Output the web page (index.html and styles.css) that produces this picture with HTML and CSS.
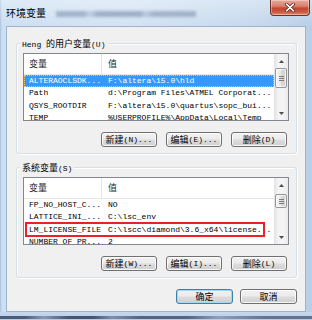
FILE: index.html
```html
<!DOCTYPE html>
<html lang="zh-CN">
<head>
<meta charset="utf-8">
<title>环境变量</title>
<link rel="stylesheet" href="styles.css">
</head>
<body>
<div class="window">
  <header class="titlebar">
    <span class="title">环境变量</span>
    <span class="blurred" aria-hidden="true"></span>
    <button class="close" aria-label="关闭">
      <svg width="12" height="9" viewBox="0 0 12 9"><path d="M2.5 1.2 L9.5 7.8 M9.5 1.2 L2.5 7.8" stroke="#5a1f18" stroke-width="3" stroke-linecap="round"/><path d="M2.5 1.2 L9.5 7.8 M9.5 1.2 L2.5 7.8" stroke="#fff" stroke-width="1.6" stroke-linecap="round"/></svg>
    </button>
  </header>
  <main class="client">
    <section class="group">
      <div class="group-label">Heng <span class="cj">的用户变量</span>(U)</div>
      <div class="list">
        <div class="list-body">
          <div class="list-head"><div class="cell"><span class="cj">变量</span></div><div class="cell"><span class="cj">值</span></div></div>
          <div class="row selected"><div class="cell">ALTERAOCLSDK...</div><div class="cell">F:\altera\15.0\hld</div></div>
          <div class="row"><div class="cell">Path</div><div class="cell">d:\Program Files\ATMEL Corporat...</div></div>
          <div class="row"><div class="cell">QSYS_ROOTDIR</div><div class="cell">F:\altera\15.0\quartus\sopc_bui...</div></div>
          <div class="row"><div class="cell">TEMP</div><div class="cell">%USERPROFILE%\AppData\Local\Temp</div></div>
        </div>
        <div class="scrollbar">
          <div class="sb-arrow"><svg width="5" height="3" viewBox="0 0 5 3"><path d="M0 3 L2.5 0 L5 3Z" fill="#4d4d4d"/></svg></div>
          <div class="sb-track"><div class="sb-thumb"><svg width="5" height="5" viewBox="0 0 5 5"><path d="M0 .5H5M0 2.5H5M0 4.5H5" stroke="#7a7a7a" stroke-width="1"/></svg></div></div>
          <div class="sb-arrow"><svg width="5" height="3" viewBox="0 0 5 3"><path d="M0 0 L2.5 3 L5 0Z" fill="#4d4d4d"/></svg></div>
        </div>
      </div>
      <div class="btn-row">
        <button class="btn"><span class="cj">新建</span>(N)...</button>
        <button class="btn"><span class="cj">编辑</span>(E)...</button>
        <button class="btn"><span class="cj">删除</span>(D)</button>
      </div>
    </section>
    <section class="group">
      <div class="group-label"><span class="cj">系统变量</span>(S)</div>
      <div class="list">
        <div class="list-body">
          <div class="list-head"><div class="cell"><span class="cj">变量</span></div><div class="cell"><span class="cj">值</span></div></div>
          <div class="row"><div class="cell">FP_NO_HOST_C...</div><div class="cell">NO</div></div>
          <div class="row"><div class="cell">LATTICE_INI_...</div><div class="cell">C:\lsc_env</div></div>
          <div class="row"><div class="cell">LM_LICENSE_FILE</div><div class="cell">C:\lscc\diamond\3.6_x64\license...</div></div>
          <div class="row"><div class="cell">NUMBER_OF_PR...</div><div class="cell">2</div></div>
        </div>
        <div class="scrollbar">
          <div class="sb-arrow"><svg width="5" height="3" viewBox="0 0 5 3"><path d="M0 3 L2.5 0 L5 3Z" fill="#4d4d4d"/></svg></div>
          <div class="sb-track"><div class="sb-thumb sb-thumb-sm"><svg width="5" height="5" viewBox="0 0 5 5"><path d="M0 .5H5M0 2.5H5M0 4.5H5" stroke="#7a7a7a" stroke-width="1"/></svg></div></div>
          <div class="sb-arrow"><svg width="5" height="3" viewBox="0 0 5 3"><path d="M0 0 L2.5 3 L5 0Z" fill="#4d4d4d"/></svg></div>
        </div>
        <div class="highlight" aria-hidden="true"></div>
      </div>
      <div class="btn-row">
        <button class="btn"><span class="cj">新建</span>(W)...</button>
        <button class="btn"><span class="cj">编辑</span>(I)...</button>
        <button class="btn"><span class="cj">删除</span>(L)</button>
      </div>
    </section>
    <div class="dialog-buttons">
      <button class="btn btn-wide btn-default"><span class="cj">确定</span></button>
      <button class="btn btn-wide"><span class="cj">取消</span></button>
    </div>
  </main>
  <div class="frame-bottom"></div>
</div>
</body>
</html>
```
FILE: styles.css
```css
* { box-sizing: border-box; }
html, body { margin: 0; padding: 0; }
body {
  width: 312px;
  height: 320px;
  overflow: hidden;
  font-family: "Liberation Mono", "Noto Sans CJK SC", monospace;
  font-size: 8px;
  color: #000;
  background: #fff;
}
.cj { font-family: "Noto Sans CJK SC", sans-serif; font-size: 9px; }

.window {
  width: 312px;
  height: 320px;
  display: flex;
  flex-direction: column;
  background: linear-gradient(90deg, #a9c0dc 0, #cddff2 2px, #d4e3f4 40%, #c6d9ee 80%, #b9cfe8 100%);
}

.titlebar {
  height: 26px;
  flex: none;
  display: flex;
  align-items: flex-start;
  padding-left: 6px;
  background: linear-gradient(180deg, rgba(255,255,255,.35), rgba(255,255,255,0) 26px);
}
.title {
  font-family: "Noto Sans CJK SC", sans-serif;
  font-size: 10px;
  line-height: 10px;
  margin-top: 8px;
}
.blurred {
  width: 140px;
  height: 6px;
  margin: 11px 0 0 10px;
  background: linear-gradient(90deg, rgba(100,120,150,.45) 0 20%, rgba(100,120,150,.2) 24%, rgba(100,120,150,.5) 30% 60%, rgba(100,120,150,.25) 64%, rgba(100,120,150,.45) 70% 100%);
  filter: blur(1.5px);
}
.close {
  margin-left: auto;
  margin-right: 2px;
  width: 40px;
  height: 16px;
  padding: 0;
  border: 1px solid #6e3026;
  border-top: none;
  border-radius: 0 0 4px 4px;
  background: linear-gradient(180deg, #e9a99a 0, #d98270 40%, #c4462f 55%, #c95a40 80%, #dc8c72 100%);
  box-shadow: inset 0 0 0 1px rgba(255,255,255,.35);
  display: flex;
  align-items: center;
  justify-content: center;
}

.client {
  flex: 1;
  margin: 0 6px;
  background: #f0f0f0;
  border: 1px solid #9fb3cb;
  padding: 16px 8px 0 9px;
  display: flex;
  flex-direction: column;
}

.group {
  border: 1px solid #d5dfe5;
  border-radius: 3px;
  padding: 0 7px 6px 6px;
  box-shadow: inset 1px 1px 0 #fff, 1px 1px 0 #fff;
}
.group + .group { margin-top: 13px; }
.group-label {
  width: fit-content;
  height: 11px;
  line-height: 11px;
  margin: -6px 0 0 -3px;
  padding: 0 2px;
  background: #f0f0f0;
  white-space: nowrap;
}

.list {
  position: relative;
  margin-top: 4px;
  height: 68px;
  border: 1px solid #828790;
  background: #fff;
  display: flex;
  overflow: hidden;
}
.list-body { flex: 1; min-width: 0; }
.list-head {
  display: grid;
  grid-template-columns: 78px 1fr;
  height: 20.5px;
  border-bottom: 1px solid #e5e5e5;
  color: #1e1e1e;
}
.list-head .cell {
  display: flex;
  align-items: center;
  height: 100%;
}
.list-head .cell:first-child { border-right: 1px solid #e5e5e5; }
.row {
  display: grid;
  grid-template-columns: 78px 1fr;
  height: 12.5px;
  line-height: 12.5px;
}
.cell {
  padding-left: 5px;
  white-space: nowrap;
  overflow: hidden;
}
.cell + .cell { padding-left: 6px; }
.row.selected {
  background: #3399ff;
  color: #fff;
  outline: 1px dotted #f7c27a;
  outline-offset: -1px;
}

.scrollbar {
  width: 14px;
  flex: none;
  display: flex;
  flex-direction: column;
  background: linear-gradient(90deg, #e2e2e2, #f4f4f4 30%, #f4f4f4 70%, #e9e9e9);
}
.sb-arrow {
  height: 14px;
  display: flex;
  align-items: center;
  justify-content: center;
}
.sb-track { flex: 1; }
.sb-thumb {
  height: 20px;
  margin: 0 1px;
  border: 1px solid #959595;
  border-radius: 2px;
  background: linear-gradient(90deg, #f4f4f4, #e8e8e8 50%, #d9d9d9 51%, #d2d2d2);
  box-shadow: inset 0 0 0 1px rgba(255,255,255,.7);
  display: flex;
  align-items: center;
  justify-content: center;
}
.sb-thumb-sm { height: 14px; margin-top: 2px; }

.highlight {
  position: absolute;
  left: 1px;
  top: 44px;
  width: 240px;
  height: 15px;
  border: 2px solid #ec2127;
}

.btn-row {
  display: flex;
  justify-content: flex-end;
  gap: 9px;
  margin: 11px 2px 0 0;
}
.btn {
  width: 56px;
  height: 15px;
  padding: 0;
  font: inherit;
  color: #000;
  border: 1px solid #707070;
  border-radius: 3px;
  background: linear-gradient(180deg, #f2f2f2 0, #ebebeb 48%, #dddddd 52%, #cfcfcf 100%);
  box-shadow: inset 0 0 0 1px rgba(255,255,255,.8);
  display: flex;
  align-items: center;
  justify-content: center;
  white-space: nowrap;
  line-height: 1;
}
.dialog-buttons {
  display: flex;
  justify-content: flex-end;
  gap: 7px;
  margin-top: 11px;
}
.btn-wide { width: 57px; }
.btn-default {
  border-color: #3c7fb1;
  box-shadow: inset 0 0 0 1px #9fd8f8;
}

.frame-bottom {
  height: 8px;
  flex: none;
  background:
    linear-gradient(90deg, rgba(40,55,80,.75) 0 8%, rgba(40,55,80,.35) 14%, rgba(40,55,80,.8) 22% 30%, rgba(40,55,80,.4) 36%, rgba(40,55,80,.7) 45% 60%, rgba(40,55,80,.3) 70%, rgba(40,55,80,.6) 85% 100%) 0 4px / 100% 3px no-repeat,
    linear-gradient(180deg, #c6d8ee, #b5cbe6);
}
```
